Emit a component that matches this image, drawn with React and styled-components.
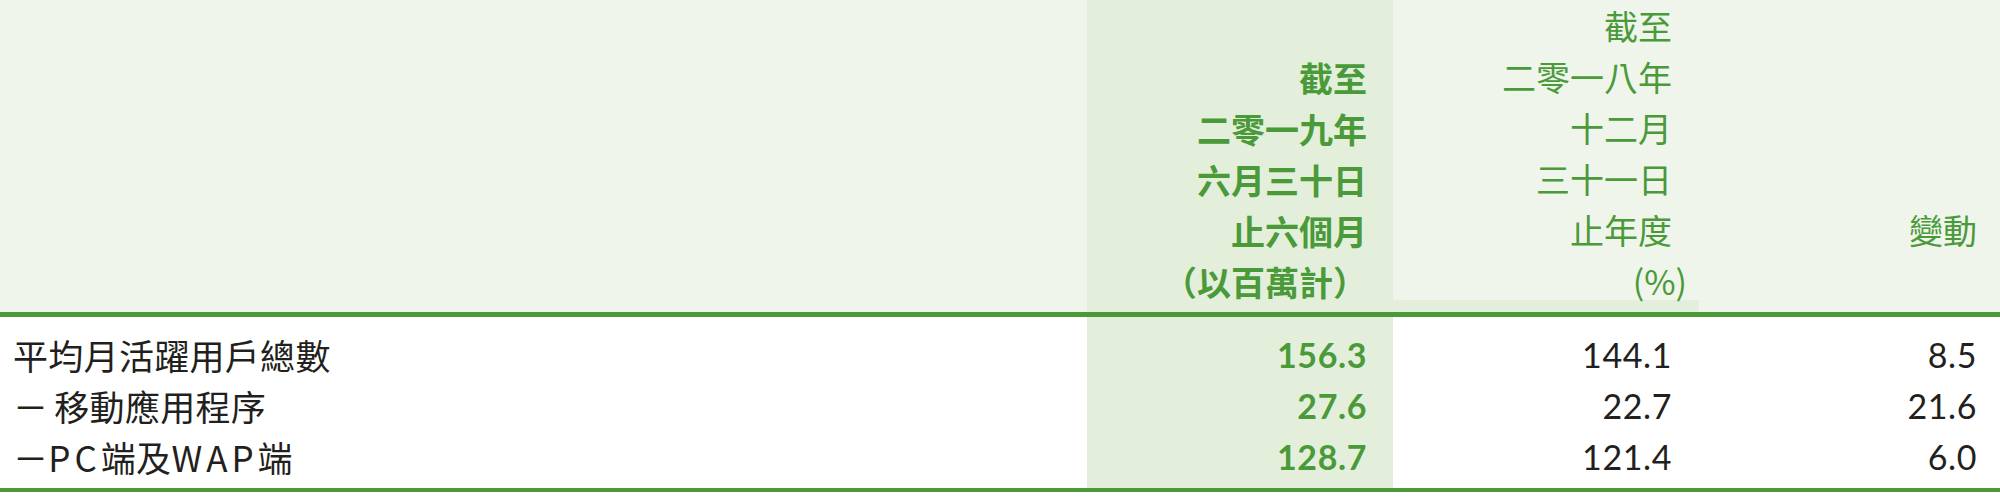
import React from 'react';
import styled, { createGlobalStyle } from 'styled-components';

const GREEN = '#4a9a3a';
const HEADER_BG = '#eff5ea';
const HIGHLIGHT = '#e3efdb';
const INK = '#231f20';

const GlobalStyle = createGlobalStyle`
  html, body {
    margin: 0;
    padding: 0;
    background: #ffffff;
  }
  body {
    font-family: "Noto Sans CJK TC", "Noto Sans", sans-serif;
  }
`;

const Table = styled.div`
  width: 2000px;
  display: grid;
  grid-template-columns: 1087px 306px 306px 301px;
`;

const HeaderCell = styled.div`
  height: 317px;
  box-sizing: border-box;
  background: ${({ $highlight }) => ($highlight ? HIGHLIGHT : HEADER_BG)};
  background-image: ${({ $strip }) =>
    $strip
      ? `linear-gradient(to bottom, ${HEADER_BG} 0, ${HEADER_BG} 300px, ${HIGHLIGHT} 300px)`
      : 'none'};
  border-bottom: 5px solid ${GREEN};
  display: flex;
  flex-direction: column;
  justify-content: flex-end;
  align-items: flex-end;
  padding: 0 ${({ $pr }) => $pr || 0}px ${({ $pb }) => $pb || 0}px 0;
`;

const HeadLine = styled.div`
  font-size: 34px;
  line-height: 51px;
  color: ${GREEN};
  font-weight: ${({ $bold }) => ($bold ? 700 : 400)};
  white-space: nowrap;
  margin-right: ${({ $shift }) => $shift || 0}px;
`;

const Body = styled.div`
  grid-column: 1 / -1;
  display: grid;
  grid-template-columns: 1087px 306px 306px 301px;
  border-bottom: 4px solid ${GREEN};
`;

const BodyCol = styled.div`
  display: flex;
  flex-direction: column;
  align-items: ${({ $left }) => ($left ? 'flex-start' : 'flex-end')};
  padding: 12px ${({ $pr }) => $pr || 0}px 6px ${({ $left }) => ($left ? 13 : 0)}px;
  background: ${({ $highlight }) => ($highlight ? HIGHLIGHT : 'transparent')};
`;

const Label = styled.div`
  height: 51px;
  line-height: 51px;
  font-size: 35px;
  color: ${INK};
  white-space: nowrap;
  letter-spacing: 0.3px;
`;

const Dash = styled.span`
  margin-right: ${({ $gap }) => $gap || 0}px;
`;

const Latin = styled.span`
  letter-spacing: 4px;
`;

const Num = styled.div`
  height: 51px;
  line-height: 51px;
  font-family: Lato, "Noto Sans", sans-serif;
  font-size: 34px;
  letter-spacing: 0.6px;
  font-weight: ${({ $bold }) => ($bold ? 700 : 400)};
  color: ${({ $bold }) => ($bold ? GREEN : INK)};
  white-space: nowrap;
`;

const rows = [
  { label: '平均月活躍用戶總數', a: '156.3', b: '144.1', c: '8.5' },
  {
    label: (
      <>
        <Dash $gap={6}>－</Dash>移動應用程序
      </>
    ),
    a: '27.6',
    b: '22.7',
    c: '21.6',
  },
  {
    label: (
      <>
        <Dash>－</Dash>
        <Latin>PC</Latin>端及<Latin>WAP</Latin>端
      </>
    ),
    a: '128.7',
    b: '121.4',
    c: '6.0',
  },
];

export default function App() {
  return (
    <>
      <GlobalStyle />
      <Table>
        <HeaderCell />
        <HeaderCell $highlight $pr={26} $pb={5}>
          {['截至', '二零一九年', '六月三十日', '止六個月', '（以百萬計）'].map((t) => (
            <HeadLine key={t} $bold>
              {t}
            </HeadLine>
          ))}
        </HeaderCell>
        <HeaderCell $strip $pr={27} $pb={6}>
          {['截至', '二零一八年', '十二月', '三十一日', '止年度'].map((t) => (
            <HeadLine key={t}>{t}</HeadLine>
          ))}
          <HeadLine $shift={-15}>(%)</HeadLine>
        </HeaderCell>
        <HeaderCell $pr={23} $pb={57}>
          <HeadLine>變動</HeadLine>
        </HeaderCell>
        <Body>
          <BodyCol $left>
            {rows.map((r, i) => (
              <Label key={i}>{r.label}</Label>
            ))}
          </BodyCol>
          <BodyCol $highlight $pr={26}>
            {rows.map((r) => (
              <Num key={r.a} $bold>
                {r.a}
              </Num>
            ))}
          </BodyCol>
          <BodyCol $pr={27}>
            {rows.map((r) => (
              <Num key={r.b}>{r.b}</Num>
            ))}
          </BodyCol>
          <BodyCol $pr={23}>
            {rows.map((r) => (
              <Num key={r.c}>{r.c}</Num>
            ))}
          </BodyCol>
        </Body>
      </Table>
    </>
  );
}
